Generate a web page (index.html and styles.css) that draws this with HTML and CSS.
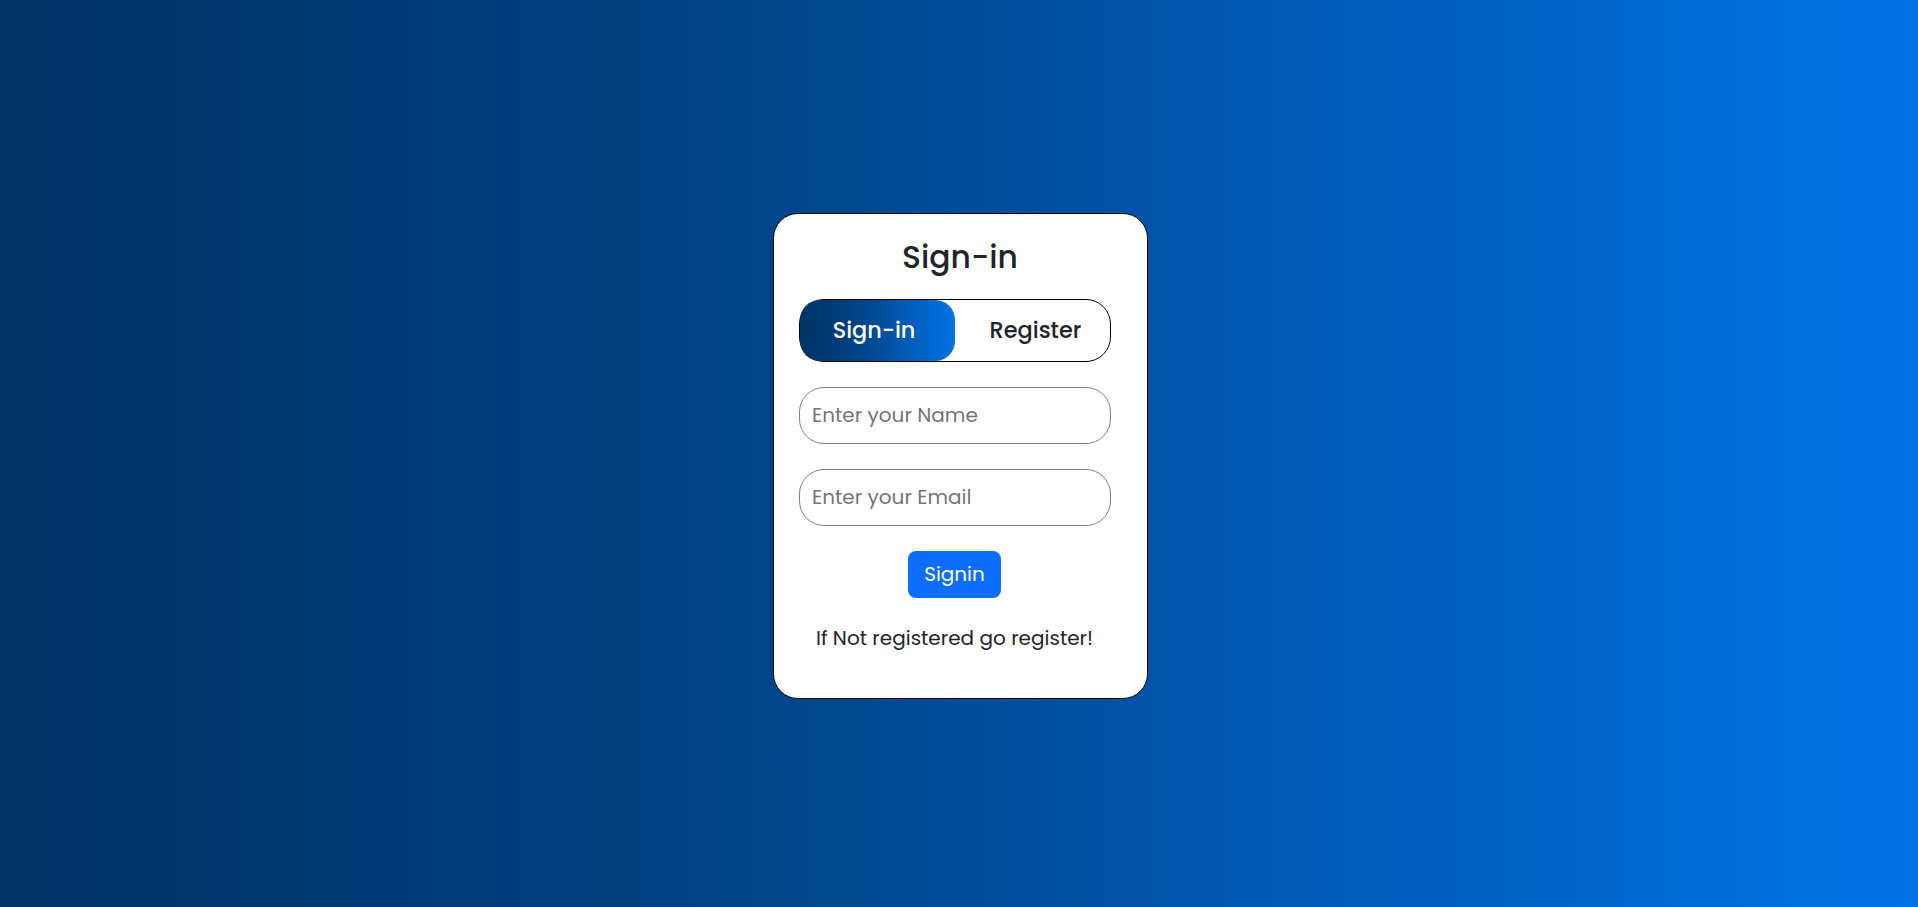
FILE: index.html
```html
<!DOCTYPE html>
<html lang="en">
<head>
<meta charset="utf-8">
<title>Sign-in</title>
<link rel="stylesheet" href="styles.css">
</head>
<body>
<main class="card">
  <h2 class="title">Sign-in</h2>
  <form class="form">
    <div class="tabs">
      <button type="button" class="tab tab-active">Sign-in</button>
      <button type="button" class="tab tab-register">Register</button>
    </div>
    <input class="field field-name" type="text" placeholder="Enter your Name">
    <input class="field field-email" type="text" placeholder="Enter your Email">
    <button type="button" class="submit">Signin</button>
    <p class="hint">If Not registered go register!</p>
  </form>
</main>
</body>
</html>
```
FILE: styles.css
```css
* {
  box-sizing: border-box;
}

body {
  margin: 0;
  height: 100vh;
  padding: 213px 0 0 2px;
  overflow: hidden;
  background: linear-gradient(to right, #003366, #004080, #0059b3, #0073e6);
  font-family: Poppins, Inter, sans-serif;
  color: #212529;
}

button,
input {
  font: inherit;
  color: inherit;
}

.card {
  width: 375px;
  height: 486px;
  margin: 0 auto;
  padding: 24px 25px 0;
  background: #fff;
  border: 1px solid #000;
  border-radius: 25px;
}

.title {
  margin: 0 0 23px;
  font-size: 31.4px;
  font-weight: 500;
  line-height: 38px;
  text-align: center;
}

.form {
  width: 312px;
  display: flex;
  flex-direction: column;
  align-items: center;
}

.tabs {
  display: flex;
  width: 312px;
  height: 63px;
  margin-bottom: 25px;
  border: 1px solid #000;
  border-radius: 25px;
}

.tab {
  width: 50%;
  border: 0;
  padding: 0 0 2px;
  background: none;
  font-size: 22.4px;
  font-weight: 500;
  line-height: 30px;
}

.tab-active {
  border-radius: 20px;
  padding-right: 6px;
  background: linear-gradient(to right, #003366, #004080, #0059b3, #0073e6);
  color: #fff;
}

.tab-register {
  padding-left: 7px;
}

.field {
  width: 312px;
  height: 57px;
  margin: 0 0 25px;
  padding: 0 12.5px 2px;
  border: 1px solid #808080;
  border-radius: 25px;
  background: #fff;
  font-size: 20px;
}

.field::placeholder {
  color: #757575;
  opacity: 1;
}

.submit {
  width: 93px;
  height: 47px;
  padding: 0 0 2px;
  border: 0;
  border-radius: 8px;
  background: #0d6efd;
  color: #fff;
  font-size: 20px;
  line-height: 30px;
}

.hint {
  margin: 25px 0 0;
  font-size: 20px;
  line-height: 30px;
  white-space: nowrap;
}
```
